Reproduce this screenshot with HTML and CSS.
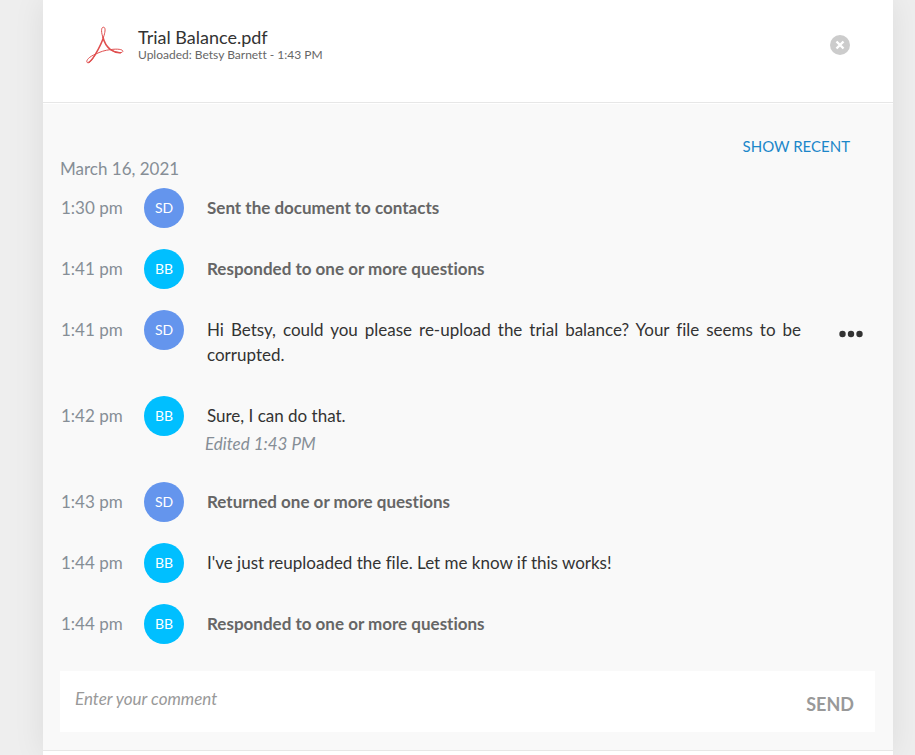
FILE: index.html
```html
<!DOCTYPE html>
<html lang="en">
<head>
<meta charset="utf-8">
<meta name="viewport" content="width=device-width, initial-scale=1">
<title>Trial Balance.pdf</title>
<link rel="stylesheet" href="styles.css">
</head>
<body>
<main class="panel">
  <header class="file">
    <svg class="file-icon" viewBox="0 0 38 38" aria-hidden="true">
      <path class="loop" d="M17.200 12C15.200 7 14.800 1.200 17.400 1.200C20.200 1.200 19 7 17.200 12M9.500 28.200C3.500 30.500-.5 34.500 1.200 36.500C3 38 6.500 33.500 9.500 28.200M24.500 23.600C31 22.600 37 23.300 36.800 25.300C36.500 27.600 30 27 24.500 23.600M9.500 28.200C14 25.800 19 24.200 24.500 23.600"/>
      <path class="limb" d="M16.800 10.500C18 16 20.500 20.500 24.500 23.600C28 26 32 27 35 26.700M17.200 12C15.800 17 12.500 23 9.500 28.200C7 32.500 5 35 2.500 36.700"/>
    </svg>
    <div class="file-text">
      <h1 class="file-name">Trial Balance.pdf</h1>
      <p class="file-meta">Uploaded: Betsy Barnett - 1:43 PM</p>
    </div>
    <button class="remove" type="button" aria-label="Remove file">
      <svg viewBox="0 0 20 20" aria-hidden="true"><circle cx="10" cy="10" r="10"/><path d="M6.500 6.500l7 7M13.500 6.500l-7 7"/></svg>
    </button>
  </header>

  <section class="activity">
    <div class="toolbar"><a class="recent" href="#recent">SHOW RECENT</a></div>
    <h2 class="date">March 16, 2021</h2>
    <ol class="log">
      <li class="entry"><time class="time">1:30 pm</time><span class="avatar sd">SD</span><div class="body"><p class="event">Sent the document to contacts</p></div></li>
      <li class="entry"><time class="time">1:41 pm</time><span class="avatar bb">BB</span><div class="body"><p class="event">Responded to one or more questions</p></div></li>
      <li class="entry"><time class="time">1:41 pm</time><span class="avatar sd">SD</span><div class="body"><p>Hi Betsy, could you please re-upload the trial balance? Your file seems to be corrupted.</p></div>
        <button class="more" type="button" aria-label="Comment options"><svg viewBox="0 0 24 8" aria-hidden="true"><circle cx="3.500" cy="4" r="3.200"/><circle cx="12" cy="4" r="3.200"/><circle cx="20.500" cy="4" r="3.200"/></svg></button></li>
      <li class="entry"><time class="time">1:42 pm</time><span class="avatar bb">BB</span><div class="body"><p>Sure, I can do that.</p><p class="edited">Edited 1:43 PM</p></div></li>
      <li class="entry"><time class="time">1:43 pm</time><span class="avatar sd">SD</span><div class="body"><p class="event">Returned one or more questions</p></div></li>
      <li class="entry"><time class="time">1:44 pm</time><span class="avatar bb">BB</span><div class="body"><p>I've just reuploaded the file. Let me know if this works!</p></div></li>
      <li class="entry"><time class="time">1:44 pm</time><span class="avatar bb">BB</span><div class="body"><p class="event">Responded to one or more questions</p></div></li>
    </ol>
    <form class="composer">
      <input class="comment" type="text" aria-label="Comment" placeholder="Enter your comment">
      <button class="send" type="button">SEND</button>
    </form>
  </section>
</main>
</body>
</html>
```
FILE: styles.css
```css
* {
  box-sizing: border-box;
}

body {
  margin: 0;
  background: #eee;
  color: #333;
  font-family: Lato, "Liberation Sans", sans-serif;
  font-size: 17px;
  font-variant-ligatures: none;
  line-height: 25px;
  overflow-x: hidden;
}

h1, h2, p, ol {
  margin: 0;
  padding: 0;
  font-weight: 400;
}

button {
  border: 0;
  padding: 0;
  background: none;
  font: inherit;
  cursor: pointer;
}

svg {
  display: block;
}

.panel {
  min-height: 100vh;
  margin: 0 22px 0 43px;
  background: #fff;
  box-shadow: 0 0 30px rgba(0, 0, 0, 0.08);
}

.file {
  display: flex;
  align-items: flex-start;
  padding: 26px 43px 38px;
  border-bottom: 1px solid #e7e7e7;
}

.file-icon {
  width: 38px;
  height: 38px;
  fill: none;
  stroke: #e04f4f;
}

.loop {
  stroke-width: 1;
}

.limb {
  stroke-width: 1.5;
}

.file-text {
  flex: 1;
  padding-left: 14px;
}

.file-name {
  font-size: 18px;
  line-height: 22px;
}

.file-meta {
  color: #666;
  font-size: 12px;
  line-height: 14px;
}

.remove {
  margin-top: 9px;
}

.remove svg {
  width: 20px;
  height: 20px;
  fill: #ccc;
}

.remove path {
  stroke: #fff;
  stroke-width: 2.4;
}

.activity {
  margin-top: 1px;
  padding: 30px 18px 18px 17px;
  background: #f9f9f9;
  border-bottom: 1px solid #e7e7e7;
}

.toolbar {
  padding-right: 25px;
  text-align: right;
  font-size: 15px;
  line-height: 24px;
}

.recent {
  color: #1c87c9;
  text-decoration: none;
}

.date {
  color: #868e96;
  font-size: 17px;
  line-height: 22px;
}

.log {
  padding-top: 8px;
  list-style: none;
}

.entry {
  display: flex;
  align-items: flex-start;
  padding-bottom: 29px;
}

.time {
  flex: 0 0 84px;
  padding: 7px 0 0 1px;
  color: #868e96;
}

.avatar {
  flex: 0 0 40px;
  height: 40px;
  margin-bottom: -19px;
  border-radius: 50%;
  color: #fff;
  font-size: 14px;
  line-height: 40px;
  text-align: center;
}

.sd {
  background: #6495ed;
}

.bb {
  background: #00bfff;
}

.body {
  flex: 1;
  margin: 0 74px 0 23px;
  padding-top: 7px;
  text-align: justify;
}

.more {
  width: 24px;
  margin: 20px 12px 0 -36px;
}

.more svg {
  width: 24px;
  height: 8px;
  fill: #333;
}

.event {
  color: #666;
  font-weight: 700;
}

.edited {
  margin-left: -2px;
  padding-top: 6px;
  color: #868e96;
  font-style: italic;
  line-height: 19px;
}

.composer {
  display: flex;
  align-items: flex-start;
  margin-top: 6px;
  padding: 15px 21px 15px 15px;
  background: #fff;
}

.comment {
  flex: 1;
  min-width: 0;
  height: 25px;
  padding: 0;
  border: 0;
  outline: 0;
  background: none;
  color: #333;
  font: inherit;
}

.comment::placeholder {
  color: #999;
  font-style: italic;
  opacity: 1;
}

.send {
  padding-top: 6px;
  color: #999;
  font-size: 18px;
  font-weight: 700;
}
```
